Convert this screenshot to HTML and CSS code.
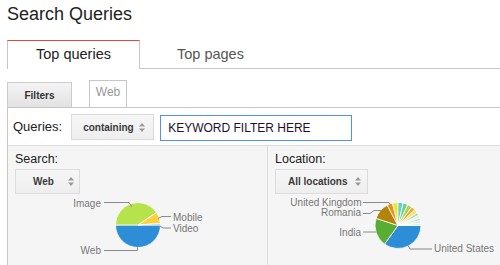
FILE: index.html
```html
<!DOCTYPE html>
<html>
<head>
<meta charset="utf-8">
<link rel="stylesheet" href="styles.css">
</head>
<body>
<div class="page">
  <h1 class="title">Search Queries</h1>
  <div class="tabs">
    <div class="tab active">Top queries</div>
    <div class="tab second">Top pages</div>
  </div>
  <div class="subtabs">
    <div class="btn-filters">Filters</div>
    <div class="subtab">Web</div>
  </div>
  <div class="panel">
    <div class="query-row">
      <span class="q-label">Queries:</span>
      <div class="select sel-containing"><span>containing</span><svg class="arr" width="6" height="9" viewBox="0 0 6 9"><path d="M0 3.5 L3 0 L6 3.5 Z M0 5.5 L3 9 L6 5.5 Z"/></svg></div>
      <div class="input">KEYWORD FILTER HERE</div>
    </div>
    <div class="cols">
      <div class="col left">
        <div class="col-head">
          <div class="c-label">Search:</div>
          <div class="select sel-web"><span>Web</span><svg class="arr" width="6" height="9" viewBox="0 0 6 9"><path d="M0 3.5 L3 0 L6 3.5 Z M0 5.5 L3 9 L6 5.5 Z"/></svg></div>
        </div>
        <svg class="chart" width="259" height="69" viewBox="8 196 259 69">
          <g class="slices">
            <path fill="#2d8dd6" d="M138,225 L160.5,225 A22.5,22.5 0 0 1 115.5,225 Z"/>
            <path fill="#b6e24c" d="M138,225 L115.5,225 A22.5,22.5 0 0 1 156.65,212.42 Z"/>
            <path fill="#fdd13d" d="M138,225 L156.65,212.42 A22.5,22.5 0 0 1 160.45,223.43 Z"/>
            <path fill="#7ec4ef" d="M138,225 L160.45,223.43 A22.5,22.5 0 0 1 160.5,225 Z"/>
          </g>
          <g class="leads">
            <path d="M104,202.5 L129,202.5 L132,207"/>
            <path d="M104,250.5 L137.5,250.5 L137.5,247.5"/>
            <path d="M158,218.5 L162,216.5 L171,216.5"/>
            <path d="M160,226 L163,228 L171,228"/>
          </g>
          <text class="lbl" x="101" y="206.5" text-anchor="end">Image</text>
          <text class="lbl" x="101" y="254" text-anchor="end">Web</text>
          <text class="lbl" x="173" y="220.5">Mobile</text>
          <text class="lbl" x="173" y="231.5">Video</text>
        </svg>
      </div>
      <div class="col right">
        <div class="col-head">
          <div class="c-label">Location:</div>
          <div class="select sel-loc"><span>All locations</span><svg class="arr" width="6" height="9" viewBox="0 0 6 9"><path d="M0 3.5 L3 0 L6 3.5 Z M0 5.5 L3 9 L6 5.5 Z"/></svg></div>
        </div>
        <svg class="chart" width="232" height="69" viewBox="268 196 232 69">
          <g class="slices">
            <path fill="#2d8dd6" d="M398,225.5 L421,225.5 A23,23 0 0 1 384.48,244.11 Z"/>
            <path fill="#58ad34" d="M398,225.5 L384.48,244.11 A23,23 0 0 1 376.12,218.39 Z"/>
            <path fill="#b38408" d="M398,225.5 L376.12,218.39 A23,23 0 0 1 387.20,205.19 Z"/>
            <path fill="#f38b1c" d="M398,225.5 L387.20,205.19 A23,23 0 0 1 392.44,203.18 Z"/>
            <path fill="#f3e525" d="M398,225.5 L392.44,203.18 A23,23 0 0 1 398,202.5 Z"/>
            <path fill="#5fcfcc" d="M398,225.5 L398,202.5 A23,23 0 0 1 403.17,203.09 Z"/>
            <path fill="#6fd08e" d="M398,225.5 L403.17,203.09 A23,23 0 0 1 407.72,204.66 Z"/>
            <path fill="#a9d858" d="M398,225.5 L407.72,204.66 A23,23 0 0 1 411.84,207.13 Z"/>
            <path fill="#f7a531" d="M398,225.5 L411.84,207.13 A23,23 0 0 1 414.82,209.81 Z"/>
            <path fill="#fde24a" d="M398,225.5 L414.82,209.81 A23,23 0 0 1 417.07,212.64 Z"/>
            <path fill="#9fd8f2" d="M398,225.5 L417.07,212.64 A23,23 0 0 1 418.67,215.42 Z"/>
            <path fill="#fff188" d="M398,225.5 L418.67,215.42 A23,23 0 0 1 419.75,218.01 Z"/>
            <path fill="#a6e9e2" d="M398,225.5 L419.75,218.01 A23,23 0 0 1 420.50,220.72 Z"/>
            <path fill="#c6f0c4" d="M398,225.5 L420.50,220.72 A23,23 0 0 1 420.87,223.10 Z"/>
            <path fill="#dff2f8" d="M398,225.5 L420.87,223.10 A23,23 0 0 1 421,225.5 Z"/>
          </g>
          <g class="leads">
            <path d="M363,202.5 L389,202.5 L390.5,205"/>
            <path d="M363,213.5 L370,213.5 L374,210.5 L381,210.5"/>
            <path d="M363,232 L376,232"/>
            <path d="M432,249 L410,249 L408,245.5"/>
          </g>
          <text class="lbl" x="361.5" y="205.5" text-anchor="end">United Kingdom</text>
          <text class="lbl" x="361" y="216" text-anchor="end">Romania</text>
          <text class="lbl" x="361" y="235.5" text-anchor="end">India</text>
          <text class="lbl" x="434" y="252">United States</text>
        </svg>
      </div>
    </div>
  </div>
</div>
</body>
</html>
```
FILE: styles.css
```css
html, body {
  margin: 0;
  padding: 0;
  background: #ffffff;
}
body {
  font-family: "Liberation Sans", Arial, sans-serif;
  color: #222222;
  width: 500px;
  height: 265px;
  overflow: hidden;
}
.page {
  padding-left: 7px;
}
.title {
  margin: 0;
  padding-top: 4px;
  font-size: 18px;
  font-weight: normal;
  line-height: 21px;
  color: #222222;
}
.tabs {
  margin-top: 15px;
  display: flex;
  border-bottom: 1px solid #c6c6c6;
  height: 28px;
}
.tab {
  font-size: 14.5px;
  line-height: 27px;
  height: 27px;
  color: #555555;
}
.tab.active {
  color: #222222;
  border-top: 1px solid #dd4b39;
  border-left: 1px solid #c6c6c6;
  border-right: 1px solid #c6c6c6;
  background: #ffffff;
  height: 28px;
  margin-bottom: -1px;
  padding: 0 28px;
}
.tab.second {
  padding: 1px 37px 0;
}
.subtabs {
  display: flex;
  align-items: flex-end;
  height: 38px;
}
.btn-filters {
  width: 63px;
  height: 24px;
  border: 1px solid #cccccc;
  border-bottom: none;
  background: linear-gradient(#f4f4f4, #e2e2e2);
  font-size: 10px;
  font-weight: bold;
  color: #333333;
  line-height: 25px;
  text-align: center;
}
.subtab {
  margin-left: 17px;
  width: 36px;
  height: 26px;
  border: 1px solid #c6c6c6;
  border-bottom: none;
  background: #ffffff;
  font-size: 12px;
  color: #999999;
  text-align: center;
  line-height: 22px;
}
.panel {
  border-top: 1px solid #c6c6c6;
  border-left: 1px solid #c6c6c6;
}
.query-row {
  display: flex;
  align-items: flex-start;
  padding: 6px 0 5px 5px;
  border-bottom: 1px solid #dddddd;
  height: 26px;
}
.q-label {
  font-size: 13px;
  line-height: 26px;
  margin-right: 9px;
  color: #222222;
}
.select {
  box-sizing: border-box;
  display: flex;
  align-items: center;
  justify-content: space-between;
  border: 1px solid #dcdcdc;
  background: linear-gradient(#f6f6f6, #eeeeee);
  font-size: 10px;
  font-weight: bold;
  color: #3a3a3a;
}
.arr {
  fill: #999999;
  display: block;
}
.sel-containing {
  width: 83px;
  height: 26px;
  padding: 0 8px 0 11px;
}
.input {
  box-sizing: border-box;
  margin-left: 6px;
  margin-top: 1px;
  width: 192px;
  height: 26px;
  border: 1px solid #4d90fe;
  background: #ffffff;
  font-size: 12px;
  line-height: 24px;
  padding-left: 7px;
  color: #1d1030;
}
.cols {
  display: flex;
  background: #f5f5f5;
  height: 120px;
}
.col.left {
  width: 259px;
  border-right: 1px solid #dddddd;
}
.col.right {
  width: 232px;
}
.col-head {
  padding: 6px 7px 0;
}
.c-label {
  font-size: 12.5px;
  line-height: 15px;
  color: #222222;
}
.sel-web {
  margin-top: 2px;
  width: 65px;
  height: 25px;
  padding: 0 5px 0 17px;
}
.sel-loc {
  margin-top: 2px;
  width: 93px;
  height: 25px;
  padding: 0 6px 0 12px;
}
.chart {
  display: block;
  margin-top: 2px;
}
.slices path {
  stroke: #ffffff;
  stroke-width: 0.8;
}
.leads path {
  fill: none;
  stroke: #8a8a8a;
  stroke-width: 1;
}
.lbl {
  font-family: "Liberation Sans", Arial, sans-serif;
  font-size: 10px;
  fill: #777777;
}
```
